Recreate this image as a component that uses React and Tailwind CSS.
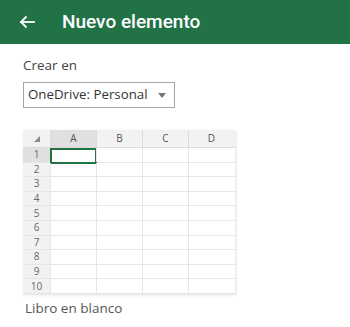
import React from "react";

const cols = ["A", "B", "C", "D"];
const rows = [1, 2, 3, 4, 5, 6, 7, 8, 9, 10];

export default function App() {
  return (
    <div className="w-[350px] h-[327px] bg-white overflow-hidden" style={{ fontFamily: '"Open Sans", "Noto Sans", sans-serif' }}>
      <div className="h-[44px] bg-[#217346] flex items-center">
        <svg className="ml-[19px]" width="16" height="14" viewBox="0 0 16 14" fill="none" stroke="white" strokeWidth="1.8" strokeLinecap="square">
          <path d="M2 7 H15" />
          <path d="M7.5 1.5 L2 7 L7.5 12.5" strokeLinecap="butt" />
        </svg>
        <span className="ml-[27px] text-white text-[19px] font-medium" style={{ fontFamily: 'Roboto, sans-serif' }}>Nuevo elemento</span>
      </div>
      <div className="pl-[23px]">
        <div className="mt-[11px] text-[13.5px] leading-[20px] text-[#444]">Crear en</div>
        <div className="mt-[7px] w-[152px] h-[26px] border border-[#a6a6a6] flex items-center justify-between pl-[4px] pr-[8px]">
          <span className="text-[13.3px] text-[#333] leading-none">OneDrive: Personal</span>
          <svg width="8" height="5" viewBox="0 0 8 5"><path d="M0 0 H8 L4 5 Z" fill="#777" /></svg>
        </div>
        <div className="mt-[22px] w-[212px] shadow-[1px_1px_3px_rgba(0,0,0,0.12)]">
          <div className="flex h-[18px] bg-[#f2f2f2] border-b border-[#dcdcdc]">
            <div className="w-[27px] flex items-center justify-center">
              <svg width="6" height="6" viewBox="0 0 6 6"><path d="M6 0 V6 H0 Z" fill="#8a8a8a" /></svg>
            </div>
            {cols.map((c, i) => (
              <div key={c} className={`w-[46px] flex items-center justify-center text-[10px] text-[#555] border-l border-[#dcdcdc] ${i === 0 ? "bg-[#e0e0e0]" : ""}`}>{c}</div>
            ))}
          </div>
          {rows.map((r) => (
            <div key={r} className="flex h-[14.6px] border-b border-[#e6e6e6]">
              <div className={`w-[27px] flex items-center justify-center text-[10px] text-[#666] ${r === 1 ? "bg-[#e0e0e0]" : "bg-[#f2f2f2]"}`}>{r}</div>
              {cols.map((c, i) => (
                <div key={c} className="relative w-[46px] border-l border-[#e6e6e6]">
                  {r === 1 && i === 0 && (
                    <div className="absolute left-[-1px] top-0 w-[47px] h-[15.6px] border-2 border-[#217346]" />
                  )}
                </div>
              ))}
            </div>
          ))}
        </div>
        <div className="mt-[4px] ml-[2px] text-[13.5px] leading-[20px] text-[#555]">Libro en blanco</div>
      </div>
    </div>
  );
}
